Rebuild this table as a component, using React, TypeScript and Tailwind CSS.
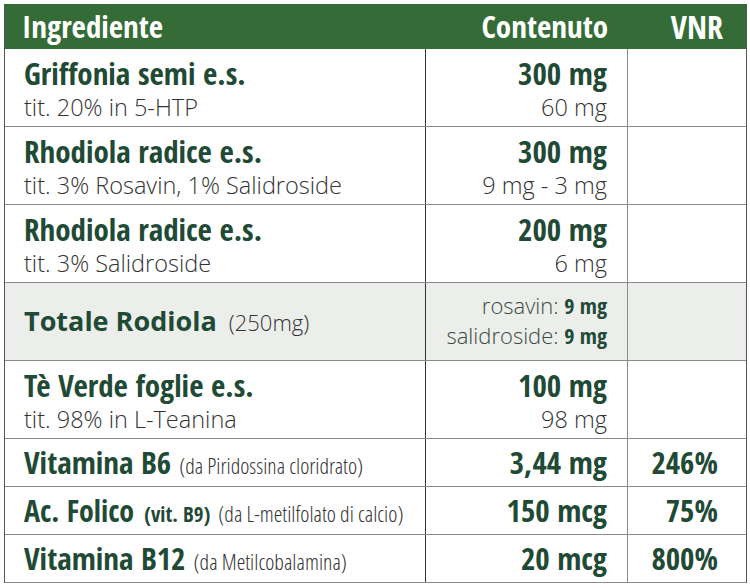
import React from 'react';

const cond = "font-['Open_Sans_Condensed','Liberation_Sans_Narrow',Arial,sans-serif]";
const condLight = "font-['Open_Sans_Condensed_Light','Open_Sans_Condensed',Arial,sans-serif]";
const open = "font-['Open_Sans','Liberation_Sans',Arial,sans-serif]";

type Item = {
  name: string;
  sub: string;
  value: string;
  valueSub: string;
};

const items: Item[] = [
  { name: 'Griffonia semi e.s.', sub: 'tit. 20% in 5-HTP', value: '300 mg', valueSub: '60 mg' },
  { name: 'Rhodiola radice e.s.', sub: 'tit. 3% Rosavin, 1% Salidroside', value: '300 mg', valueSub: '9 mg - 3 mg' },
  { name: 'Rhodiola radice e.s.', sub: 'tit. 3% Salidroside', value: '200 mg', valueSub: '6 mg' },
];

const tea: Item = { name: 'Tè Verde foglie e.s.', sub: 'tit. 98% in L-Teanina', value: '100 mg', valueSub: '98 mg' };

type Vitamin = {
  name: string;
  tag?: string;
  source: string;
  value: string;
  vnr: string;
};

const vitamins: Vitamin[] = [
  { name: 'Vitamina B6', source: '(da Piridossina cloridrato)', value: '3,44 mg', vnr: '246%' },
  { name: 'Ac. Folico', tag: '(vit. B9)', source: '(da L-metilfolato di calcio)', value: '150 mcg', vnr: '75%' },
  { name: 'Vitamina B12', source: '(da Metilcobalamina)', value: '20 mcg', vnr: '800%' },
];

function TwoLineRow({ item }: { item: Item }) {
  return (
    <div className="flex h-[78px] border-b border-[#8a8a8a]">
      <div className="w-[421px] border-r border-[#333] pl-[19px] pt-[9px]">
        <p className={`${cond} text-[31px] leading-[31px] font-bold text-[#1f4a35]`}>{item.name}</p>
        <p className={`${open} mt-[4px] text-[23.5px] leading-[28px] font-light text-[#333]`}>{item.sub}</p>
      </div>
      <div className="w-[202px] border-r border-[#8a8a8a] pr-[20px] pt-[9px] text-right">
        <p className={`${cond} text-[31px] leading-[31px] font-bold text-[#1f4a35]`}>{item.value}</p>
        <p className={`${open} mt-[4px] text-[23.5px] leading-[28px] font-light text-[#333]`}>{item.valueSub}</p>
      </div>
      <div className="flex-1" />
    </div>
  );
}

export default function App() {
  return (
    <div className="w-[750px] h-[588px] bg-white pt-[4px] pl-[4px]">
      <div className="w-[743px] border-x border-[#555]">
        <div className="flex h-[45px] items-center bg-[#346b37] text-white">
          <div className={`${cond} w-[422px] pl-[17px] text-[31px] leading-[31px] font-bold`}>Ingrediente</div>
          <div className={`${cond} w-[202px] pr-[21px] text-right text-[31px] leading-[31px] font-bold`}>Contenuto</div>
          <div className={`${cond} flex-1 pr-[23px] text-right text-[32px] leading-[31px] font-bold`}>VNR</div>
        </div>

        {items.map((item, i) => (
          <TwoLineRow key={i} item={item} />
        ))}

        <div className="flex h-[78px] border-b border-[#8a8a8a] bg-[#eceeec]">
          <div className="flex w-[421px] items-center border-r border-[#333] pl-[19px]">
            <p className="whitespace-nowrap text-[#1f4a35]">
              <span className={`${open} text-[27px] font-bold`}>Totale Rodiola</span>
              <span className={`${open} ml-[12px] text-[22px] font-light text-[#333]`}>(250mg)</span>
            </p>
          </div>
          <div className="w-[202px] border-r border-[#8a8a8a] pr-[20px] pt-[7px] text-right">
            <p className={`${open} text-[22px] leading-[30px] font-light text-[#3c4a42]`}>
              rosavin: <span className={`${cond} text-[22px] font-bold text-[#1f4a35]`}>9 mg</span>
            </p>
            <p className={`${open} text-[22px] leading-[30px] font-light text-[#3c4a42]`}>
              salidroside: <span className={`${cond} text-[22px] font-bold text-[#1f4a35]`}>9 mg</span>
            </p>
          </div>
          <div className="flex-1" />
        </div>

        <TwoLineRow item={tea} />

        {vitamins.map((v, i) => (
          <div key={i} className="flex h-[48px] items-center border-b border-[#8a8a8a]">
            <div className="flex h-full w-[421px] items-center border-r border-[#333] pl-[19px]">
              <p className="whitespace-nowrap text-[#1f4a35]">
                <span className={`${cond} ${v.tag ? 'text-[30px]' : 'text-[31px]'} font-bold`}>{v.name}</span>
                {v.tag && <span className={`${cond} ml-[10px] text-[21px] font-bold`}>{v.tag}</span>}
                <span className={`${condLight} ml-[8px] text-[22px] font-light text-[#333]`}>{v.source}</span>
              </p>
            </div>
            <div className={`${cond} flex h-full w-[202px] items-center justify-end border-r border-[#8a8a8a] pr-[20px] text-[31px] font-bold text-[#1f4a35]`}>
              {v.value}
            </div>
            <div className={`${cond} flex h-full flex-1 items-center justify-end pr-[28px] text-[31px] font-bold text-[#1f4a35]`}>
              {v.vnr}
            </div>
          </div>
        ))}
      </div>
    </div>
  );
}
